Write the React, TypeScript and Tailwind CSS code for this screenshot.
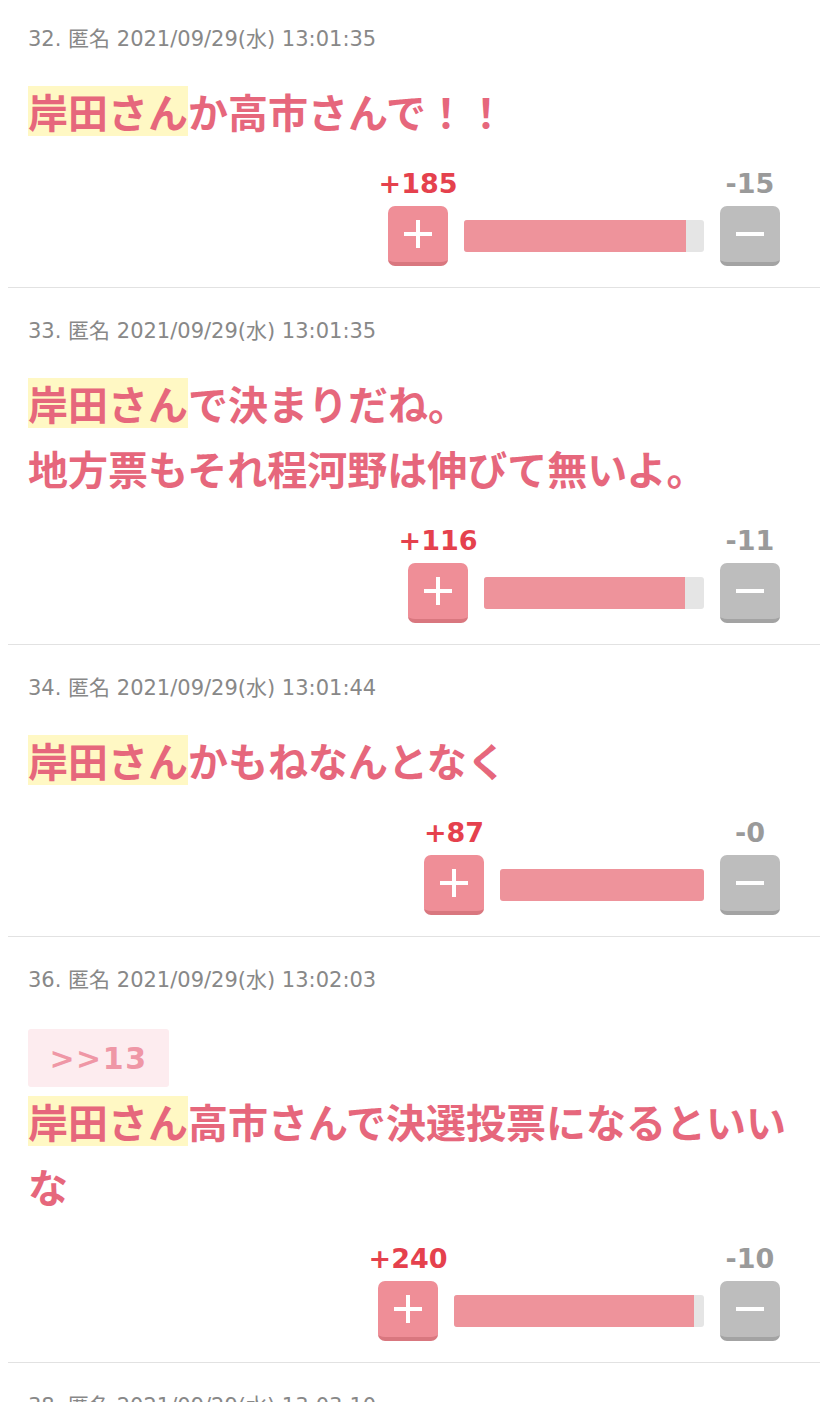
import React from "react";

type Comment = {
    no: number;
    date: string;
    quote?: string;
    lines: string[];
    plus: number;
    minus: number;
    barWidth: number;
};

const comments: Comment[] = [
    { no: 32, date: "2021/09/29(水) 13:01:35", lines: ["か高市さんで！！"], plus: 185, minus: 15, barWidth: 240 },
    { no: 33, date: "2021/09/29(水) 13:01:35", lines: ["で決まりだね。", "地方票もそれ程河野は伸びて無いよ。"], plus: 116, minus: 11, barWidth: 220 },
    { no: 34, date: "2021/09/29(水) 13:01:44", lines: ["かもねなんとなく"], plus: 87, minus: 0, barWidth: 204 },
    { no: 36, date: "2021/09/29(水) 13:02:03", quote: ">>13", lines: ["高市さんで決選投票になるといいな"], plus: 240, minus: 10, barWidth: 250 },
];

const latin = { fontFamily: '"DejaVu Sans", "Noto Sans CJK JP", sans-serif' };
const cjk = { fontFamily: '"Noto Sans CJK JP", sans-serif' };

function VoteRow({ c }: { c: Comment }) {
    const ratio = c.plus + c.minus === 0 ? 0 : c.plus / (c.plus + c.minus);
    return (
        <div className="flex justify-end items-end mr-[20px] mt-[26px]">
            <div className="flex flex-col items-center w-[60px]">
                <span className="whitespace-nowrap text-[27px] leading-[28px] font-bold text-[#e5414d]" style={latin}>
                    +{c.plus}
                </span>
                <button className="mt-2 w-[60px] h-[60px] rounded-[7px] bg-[#ef8e97] border-b-4 border-[#d9777f] flex items-center justify-center">
                    <svg width="30" height="30" viewBox="0 0 30 30">
                        <rect x="13" y="1" width="4" height="28" fill="#fff" />
                        <rect x="1" y="13" width="28" height="4" fill="#fff" />
                    </svg>
                </button>
            </div>
            <div className="h-[60px] flex items-center mx-4">
                <div className="h-[32px] bg-[#e5e5e5] rounded-[3px] overflow-hidden" style={{ width: c.barWidth }}>
                    <div className="h-full bg-[#ee939b]" style={{ width: `${ratio * 100}%` }} />
                </div>
            </div>
            <div className="flex flex-col items-center w-[60px]">
                <span className="whitespace-nowrap text-[27px] leading-[28px] font-bold text-[#9a9a9a]" style={latin}>
                    -{c.minus}
                </span>
                <button className="mt-2 w-[60px] h-[60px] rounded-[7px] bg-[#bdbdbd] border-b-4 border-[#a3a3a3] flex items-center justify-center">
                    <svg width="30" height="30" viewBox="0 0 30 30">
                        <rect x="1" y="13" width="28" height="4" fill="#fff" />
                    </svg>
                </button>
            </div>
        </div>
    );
}

function CommentItem({ c, first }: { c: Comment; first: boolean }) {
    return (
        <div className={`mx-2 px-5 border-b border-[#e2e2e2] pb-[21px] ${first ? "pt-[27px]" : "pt-[31px]"}`}>
            <div className="text-[21px] leading-[24px] text-[#888]" style={latin}>
                {c.no}. 匿名 {c.date}
            </div>
            {c.quote && (
                <div className="mt-[37px] w-[141px] h-[58px] bg-[#fdecef] rounded-[3px] flex items-center justify-center">
                    <span className="text-[30px] tracking-[1.5px] font-bold text-[#ef97a6]" style={latin}>{c.quote}</span>
                </div>
            )}
            <div
                className={`${c.quote ? "mt-[2px]" : "mt-[28px]"} text-[40px] leading-[65px] font-bold text-[#e6677c]`}
                style={cjk}
            >
                {c.lines.map((line, i) => (
                    <div key={i}>
                        {i === 0 && <span className="inline-block bg-[#fff8c4] leading-[50px]">岸田さん</span>}
                        {line}
                    </div>
                ))}
            </div>
            <VoteRow c={c} />
        </div>
    );
}

export default function App() {
    return (
        <div className="w-[828px] h-[1402px] overflow-hidden bg-white">
            {comments.map((c, i) => (
                <CommentItem key={c.no} c={c} first={i === 0} />
            ))}
            <div className="mx-2 px-5 pt-[31px]">
                <div className="text-[21px] leading-[24px] text-[#888]" style={latin}>
                    38. 匿名 2021/09/29(水) 13:03:10
                </div>
            </div>
        </div>
    );
}
